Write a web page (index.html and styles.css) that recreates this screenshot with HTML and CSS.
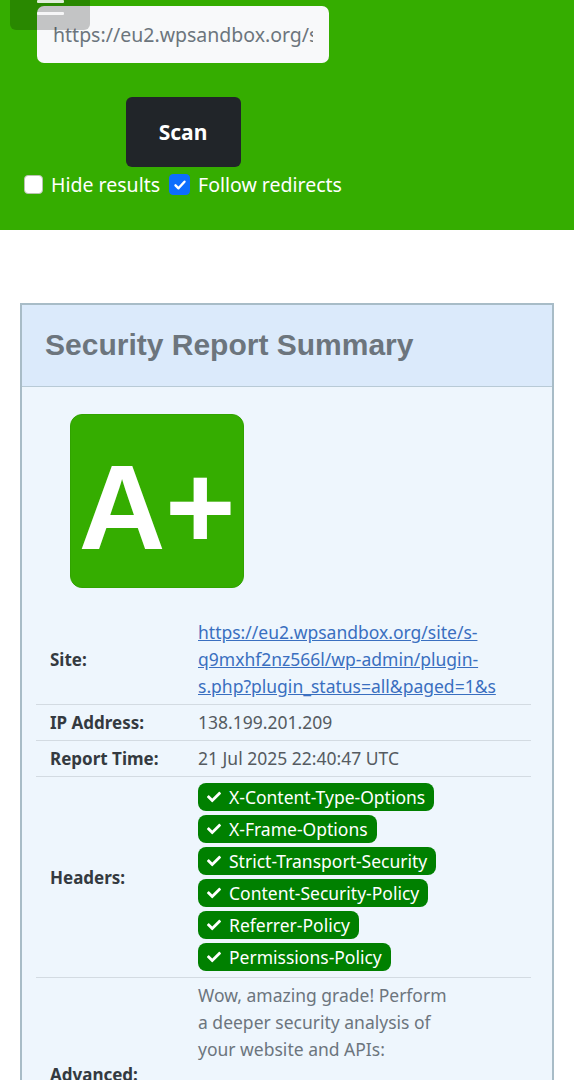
FILE: index.html
```html
<!DOCTYPE html>
<html lang="en">
<head>
<meta charset="utf-8">
<title>Security Report Summary</title>
<link rel="stylesheet" href="styles.css">
</head>
<body>
<button class="menu-toggle" type="button" aria-label="Menu">
  <span class="bar"></span><span class="bar"></span><span class="bar"></span>
</button>
<header class="hero">
  <form class="scan-form">
    <input class="url-input" type="text" value="https://eu2.wpsandbox.org/site/s-q9mxhf2nz566l/wp-admin/plugins.php">
    <button class="scan-btn" type="button">Scan</button>
    <div class="options">
      <label class="option"><span class="box"></span>Hide results</label>
      <label class="option"><span class="box checked"><svg viewBox="0 0 16 16" width="16" height="16"><path d="M3.5 8.3l3 3 6-6.6" fill="none" stroke="#fff" stroke-width="2.4" stroke-linecap="round" stroke-linejoin="round"/></svg></span>Follow redirects</label>
    </div>
  </form>
</header>

<section class="report">
  <div class="report-head">
    <h2>Security Report Summary</h2>
  </div>
  <div class="report-body">
    <div class="grade">A+</div>
    <table class="summary">
      <tr>
        <th>Site:</th>
        <td><a href="#">https://eu2.wpsandbox.org/site/s-q9mxhf2nz566l/wp-admin/plugin-s.php?plugin_status=all&amp;paged=1&amp;s</a></td>
      </tr>
      <tr>
        <th>IP Address:</th>
        <td>138.199.201.209</td>
      </tr>
      <tr>
        <th>Report Time:</th>
        <td>21 Jul 2025 22:40:47 UTC</td>
      </tr>
      <tr>
        <th>Headers:</th>
        <td>
          <ul class="badges">
            <li class="badge"><svg class="tick" viewBox="0 0 512 512"><path d="M173.898 439.404l-166.4-166.4c-9.997-9.997-9.997-26.206 0-36.204l36.203-36.204c9.997-9.998 26.207-9.998 36.204 0L192 312.69 432.095 72.596c9.997-9.997 26.207-9.997 36.204 0l36.203 36.204c9.997 9.997 9.997 26.206 0 36.204l-294.4 294.401c-9.998 9.997-26.207 9.997-36.204-.001z"/></svg>X-Content-Type-Options</li>
            <li class="badge"><svg class="tick" viewBox="0 0 512 512"><path d="M173.898 439.404l-166.4-166.4c-9.997-9.997-9.997-26.206 0-36.204l36.203-36.204c9.997-9.998 26.207-9.998 36.204 0L192 312.69 432.095 72.596c9.997-9.997 26.207-9.997 36.204 0l36.203 36.204c9.997 9.997 9.997 26.206 0 36.204l-294.4 294.401c-9.998 9.997-26.207 9.997-36.204-.001z"/></svg>X-Frame-Options</li>
            <li class="badge"><svg class="tick" viewBox="0 0 512 512"><path d="M173.898 439.404l-166.4-166.4c-9.997-9.997-9.997-26.206 0-36.204l36.203-36.204c9.997-9.998 26.207-9.998 36.204 0L192 312.69 432.095 72.596c9.997-9.997 26.207-9.997 36.204 0l36.203 36.204c9.997 9.997 9.997 26.206 0 36.204l-294.4 294.401c-9.998 9.997-26.207 9.997-36.204-.001z"/></svg>Strict-Transport-Security</li>
            <li class="badge"><svg class="tick" viewBox="0 0 512 512"><path d="M173.898 439.404l-166.4-166.4c-9.997-9.997-9.997-26.206 0-36.204l36.203-36.204c9.997-9.998 26.207-9.998 36.204 0L192 312.69 432.095 72.596c9.997-9.997 26.207-9.997 36.204 0l36.203 36.204c9.997 9.997 9.997 26.206 0 36.204l-294.4 294.401c-9.998 9.997-26.207 9.997-36.204-.001z"/></svg>Content-Security-Policy</li>
            <li class="badge"><svg class="tick" viewBox="0 0 512 512"><path d="M173.898 439.404l-166.4-166.4c-9.997-9.997-9.997-26.206 0-36.204l36.203-36.204c9.997-9.998 26.207-9.998 36.204 0L192 312.69 432.095 72.596c9.997-9.997 26.207-9.997 36.204 0l36.203 36.204c9.997 9.997 9.997 26.206 0 36.204l-294.4 294.401c-9.998 9.997-26.207 9.997-36.204-.001z"/></svg>Referrer-Policy</li>
            <li class="badge"><svg class="tick" viewBox="0 0 512 512"><path d="M173.898 439.404l-166.4-166.4c-9.997-9.997-9.997-26.206 0-36.204l36.203-36.204c9.997-9.998 26.207-9.998 36.204 0L192 312.69 432.095 72.596c9.997-9.997 26.207-9.997 36.204 0l36.203 36.204c9.997 9.997 9.997 26.206 0 36.204l-294.4 294.401c-9.998 9.997-26.207 9.997-36.204-.001z"/></svg>Permissions-Policy</li>
          </ul>
        </td>
      </tr>
      <tr>
        <th>Advanced:</th>
        <td>
          <p class="advanced-text">Wow, amazing grade! Perform a deeper security analysis of your website and APIs:</p>
          <div class="advanced-cta"></div>
        </td>
      </tr>
    </table>
  </div>
</section>
</body>
</html>
```

FILE: styles.css
```css
* { box-sizing: border-box; }

body {
  margin: 0;
  font-family: "Noto Sans", "Open Sans", sans-serif;
  font-size: 17.5px;
  line-height: 27px;
  color: #212529;
  background: #fff;
}

/* floating menu toggle (overlaps the header) */
.menu-toggle {
  position: absolute;
  left: 10px;
  top: -20px;
  width: 80px;
  height: 50px;
  border: 0;
  border-radius: 6px;
  background: rgba(0, 0, 0, 0.21);
  display: flex;
  flex-direction: column;
  align-items: center;
  justify-content: flex-end;
  gap: 9px;
  padding: 0 0 15px;
  z-index: 2;
}
.menu-toggle .bar {
  display: block;
  width: 27px;
  height: 3px;
  background: rgba(255, 255, 255, 0.85);
  border-radius: 1px;
}

/* green hero */
.hero {
  background: #35ad00;
  padding: 6px 0 32px 23px;
}
.scan-form {
  display: flex;
  flex-direction: column;
  align-items: center;
  width: 320px;
}
.url-input {
  width: 292px;
  height: 57px;
  border: 0;
  border-radius: 7px;
  background: #f8f9fa;
  padding: 0 16px;
  font-family: "Noto Sans", sans-serif;
  font-size: 19.5px;
  color: #6c757d;
  outline: none;
}
.scan-btn {
  margin-top: 34px;
  width: 115px;
  height: 70px;
  border: 0;
  border-radius: 6px;
  background: #212529;
  color: #fff;
  font-family: "Noto Sans", sans-serif;
  font-weight: 700;
  font-size: 21px;
}
.options {
  margin-top: 4px;
  display: flex;
  align-items: center;
  gap: 9px;
  color: #fff;
  font-size: 19.5px;
  line-height: 27px;
}
.option {
  display: flex;
  align-items: center;
  gap: 8px;
}
.box {
  width: 19px;
  height: 19px;
  border-radius: 4px;
  background: #fff;
  border: 1px solid #b9c2b0;
  display: flex;
  align-items: center;
  justify-content: center;
}
.box.checked {
  width: 21px;
  height: 21px;
  background: #0d6efd;
  border-color: #0d6efd;
}

/* report card */
.report {
  margin: 73px 20px 0;
  border: 2px solid #a8bcc7;
  background: #eef6fd;
}
.report-head {
  background: #dbeafb;
  border-bottom: 1px solid #b8cad6;
  padding: 21px 23px 22px;
}
.report-head h2 {
  margin: 0;
  font-family: "Liberation Sans", Arial, sans-serif;
  font-weight: 700;
  font-size: 30px;
  line-height: 38px;
  color: #6c757d;
}
.report-body {
  padding: 27px 21px 0 14px;
}
.grade {
  margin-left: 34px;
  width: 174px;
  height: 174px;
  border-radius: 12px;
  background: #35ad00;
  border: 1px solid #31a300;
  color: #fff;
  font-family: "Liberation Sans", Arial, sans-serif;
  font-weight: 700;
  font-size: 120px;
  line-height: 160px;
  padding-top: 12px;
  text-align: center;
}

.summary {
  margin-top: 27px;
  width: 100%;
  border-collapse: collapse;
}
.summary tr {
  border-bottom: 1px solid #d3dbe2;
}
.summary th,
.summary td {
  padding: 4px 14px;
  vertical-align: middle;
  text-align: left;
}
.summary th {
  width: 148px;
  font-weight: 700;
  color: #343a40;
  font-size: 17px;
}
.summary td {
  color: #555b61;
}
.summary a {
  color: #3a6fc0;
  text-decoration: underline;
  overflow-wrap: anywhere;
}

.badges {
  list-style: none;
  margin: 2px 0 2px;
  padding: 0;
  display: flex;
  flex-direction: column;
  align-items: flex-start;
  gap: 4px;
}
.badge {
  display: inline-flex;
  align-items: center;
  gap: 8px;
  height: 28px;
  padding: 0 9px;
  border-radius: 8px;
  background: #008000;
  color: #fff;
  font-size: 17.5px;
}
.tick {
  width: 14px;
  height: 14px;
  fill: #fff;
}

.advanced-text {
  margin: 0;
  max-width: 262px;
  color: #6c757d;
}
.advanced-cta {
  height: 95px;
  margin-top: 8px;
}
```
